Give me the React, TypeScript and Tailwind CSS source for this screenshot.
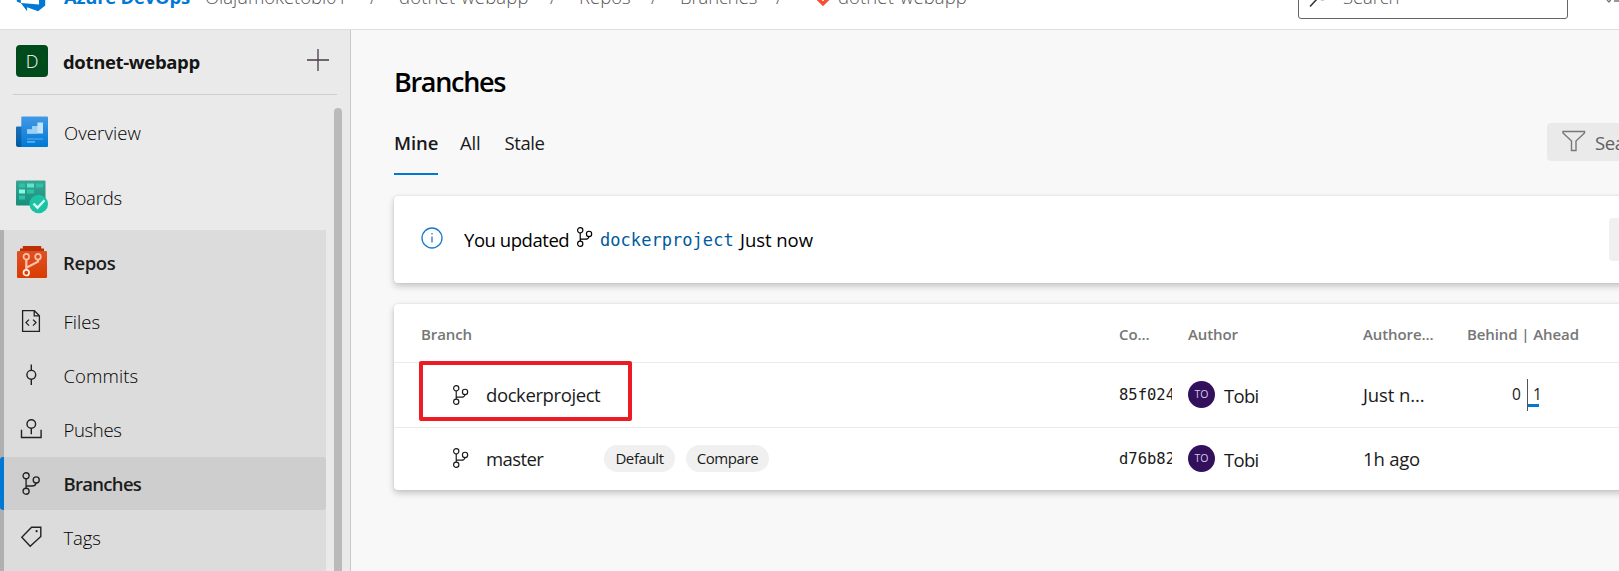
import React from "react";

function BranchIcon({ className }: { className: string }) {
  return (
    <svg viewBox="0 0 18 22" className={`shrink-0 ${className}`} fill="none" stroke="currentColor" strokeWidth="1.3">
      <circle cx="4.3" cy="3.6" r="2.9" />
      <circle cx="4.3" cy="18.4" r="2.9" />
      <circle cx="14" cy="7.6" r="2.9" />
      <path d="M4.3 6.5v9M14 10.5c-.5 1.9-1.8 2.9-3.8 2.9H4.3" />
    </svg>
  );
}

function FilesIcon() {
  return (
    <svg viewBox="0 0 22 24" className="h-6 w-[22px]" fill="none" stroke="currentColor" strokeWidth="1.3">
      <path d="M2.6 1.7h11.8l5 5v15.6H2.6zM14.2 1.7v5.2h5.2" />
      <path d="M9 10.6l-3 3 3 3M13 10.6l3 3-3 3" />
    </svg>
  );
}

function CommitIcon() {
  return (
    <svg viewBox="0 0 22 24" className="h-6 w-[22px]" fill="none" stroke="currentColor" strokeWidth="1.4">
      <circle cx="11.3" cy="11.8" r="4.4" />
      <path d="M11.3 1.6v5.8M11.3 16.2V22" />
    </svg>
  );
}

function PushIcon() {
  return (
    <svg viewBox="0 0 22 24" className="h-6 w-[22px]" fill="none" stroke="currentColor" strokeWidth="1.4">
      <circle cx="11.3" cy="7" r="4.3" />
      <path d="M11.3 11.3v6M1.5 12.8v7.7h19.6v-7.7" />
    </svg>
  );
}

function TagIcon() {
  return (
    <svg viewBox="0 0 22 24" className="h-6 w-[22px]" fill="none" stroke="currentColor" strokeWidth="1.4">
      <path d="M11.6 2.2h9.2v9.2L10.2 21.2l-8.4-9z" />
      <circle cx="16.6" cy="6.2" r="1.1" fill="currentColor" stroke="none" />
    </svg>
  );
}

function OverviewIcon() {
  return (
    <svg viewBox="0 0 32 32" className="size-8">
      <defs>
        <linearGradient id="ov" x1="0" y1="0" x2="0" y2="1">
          <stop offset="0" stopColor="#4299e6" />
          <stop offset="1" stopColor="#0078d4" />
        </linearGradient>
        <linearGradient id="ovb" x1="0" y1="0" x2="0" y2="1">
          <stop offset="0" stopColor="#1e70b8" />
          <stop offset="1" stopColor="#005ba1" />
        </linearGradient>
      </defs>
      <path d="M1 10.5h6V31H2a2 2 0 0 1-2-2V11.5a1 1 0 0 1 1-1z" fill="url(#ovb)" />
      <path d="M6 .5h25a1 1 0 0 1 1 1V30a1 1 0 0 1-1 1H4.5a1 1 0 0 0 .8-1V1.2A.7.7 0 0 1 6 .5z" fill="url(#ov)" />
      <path d="M11 13.5h5.2v-3.3h5.2V6.5H27v11H11z" fill="#c3e3fb" />
      <path d="M11 13.5h5.2v-3.3h5.2v7.3H11z" fill="#9bd0f8" />
      <path d="M11 22.4h16v1.2H11zM11 25h8v1.8h-8z" fill="#5cb0f0" />
    </svg>
  );
}

function BoardsIcon() {
  return (
    <svg viewBox="0 0 32 34" className="h-[34px] w-8">
      <defs>
        <linearGradient id="bd" x1="0" y1="0" x2="0" y2="1">
          <stop offset="0" stopColor="#3ba594" />
          <stop offset="1" stopColor="#16907b" />
        </linearGradient>
      </defs>
      <rect x="0" y=".5" width="29.5" height="25" rx="1" fill="url(#bd)" />
      <path d="M3 3.5h6v4H3zM20 3.5h7v4h-7zM11 9.5h7v4h-7zM3 15.5h6v4H3z" fill="#2bc4aa" />
      <path d="M11 3.5h7v4h-7z" fill="#5ee6cc" />
      <path d="M3 9.5h6v4H3z" fill="#86fbe6" />
      <circle cx="22.7" cy="24" r="9.3" fill="#1bc3a4" />
      <path d="M17.5 23.7l4 4 7-7.4" fill="none" stroke="#d5fff8" strokeWidth="2.4" />
    </svg>
  );
}

function ReposIcon() {
  return (
    <svg viewBox="0 0 32 32" className="-mt-0.5 size-8">
      <defs>
        <linearGradient id="rp" x1="0" y1="0" x2="0" y2="1">
          <stop offset="0" stopColor="#de5126" />
          <stop offset="1" stopColor="#da3b01" />
        </linearGradient>
      </defs>
      <path d="M6.8 0h18.4v2.6H28V6H4V2.6h2.8z" fill="#bb2f00" />
      <rect x="1" y="5" width="30" height="27" rx="1" fill="url(#rp)" />
      <g fill="none" stroke="#ffc3ab" strokeWidth="1.7">
        <circle cx="10.3" cy="10.7" r="2.8" />
        <circle cx="22" cy="10.7" r="2.8" />
        <path d="M10.3 13.5v10.2M22 13.500v2.200l-11.700 6" strokeWidth="2.2" />
        <circle cx="10.3" cy="26.7" r="2.8" stroke="#fff0e8" />
      </g>
    </svg>
  );
}

function Header() {
  return (
    <header className="h-[30px] shrink-0 overflow-hidden border-b border-[#dfdfdf] bg-white">
      <div className="-mt-[35px] flex h-[64px] items-center whitespace-nowrap text-[18.5px] font-light text-[#555] *:shrink-0">
        <svg viewBox="0 0 18 18" className="-mt-px ml-[15px] size-8">
          <path
            fill="#0078d4"
            d="M17 4v9.740l-4 3.280-6.200-2.260V17l-3.510-4.590 10.230.8V4.440zm-3.410.490L7.850 1v2.290L2.580 4.840 1 6.870v4.610l2.260 1V6.570z"
          />
        </svg>
        <div className="ml-[17px] w-[141px] font-bold tracking-[-0.25px] text-[#0078d4]">Azure DevOps</div>
        <div className="w-[165px] tracking-[-0.05px]">Olajumoketobi01</div>
        <div className="w-[29px]">/</div>
        <div className="w-[151px] tracking-[0.15px]">dotnet-webapp</div>
        <div className="w-[29px]">/</div>
        <div className="w-[72px]">Repos</div>
        <div className="w-[29px]">/</div>
        <div className="w-[96px] tracking-[-0.1px]">Branches</div>
        <div className="w-[37px]">/</div>
        <svg viewBox="0 0 20 20" className="-mt-px size-5">
          <path d="M10 .3l9.5 9.5-9.5 9.5L.5 9.800z" fill="#f65033" />
          <path d="M10 5v9M10 7l4 4" stroke="#fff" strokeWidth="1.6" />
        </svg>
        <div className="ml-[5px] w-[144px] tracking-[0.1px]">dotnet-webapp</div>
        <svg viewBox="0 0 12 8" className="h-2 w-3" fill="none" stroke="currentColor">
          <path d="M1 1l5 5 5-5" />
        </svg>
        <div className="ml-[304px] mt-[3px] flex h-10 w-[270px] items-center rounded-[3px] border border-[#666]">
          <svg viewBox="0 0 22 22" className="ml-2.5 size-[22px]" fill="none" stroke="#333" strokeWidth="1.5">
            <circle cx="13.5" cy="5" r="6.5" />
            <path d="M9 10l-8 8.500" />
          </svg>
          <span className="-mt-[3px] ml-[12px] tracking-[-0.1px]">Search</span>
        </div>
        <svg viewBox="0 0 22 22" className="-mt-px ml-[38px] size-[22px]" fill="none" stroke="#777" strokeWidth="1.4">
          <path d="M8 3h14M8 9h14M8 15h14M1 14l2 2 3-4" />
        </svg>
      </div>
    </header>
  );
}

const services = [
  { label: "Overview", icon: <OverviewIcon />, cls: "tracking-[0.1px]" },
  { label: "Boards", icon: <BoardsIcon />, cls: "tracking-[-0.2px]" },
];

const hubs = [
  { label: "Files", icon: <FilesIcon />, cls: "tracking-[0.05px]" },
  { label: "Commits", icon: <CommitIcon />, cls: "tracking-[0.1px]" },
  { label: "Pushes", icon: <PushIcon />, cls: "tracking-[-0.35px]" },
  { label: "Branches", icon: <BranchIcon className="-mr-px h-[23px] w-5" />, cls: "tracking-[-0.7px]", active: true },
  { label: "Tags", icon: <TagIcon />, cls: "tracking-[-0.1px]" },
];

function Sidebar() {
  return (
    <aside className="flex w-[351px] shrink-0 flex-col overflow-hidden border-r border-[#c8c8c8] bg-[#eaeaea]">
      <div className="mx-[13px] flex h-[65px] shrink-0 items-center border-b border-[#cdcdcd] pl-[3px]">
        <div className="-mt-0.5 flex size-8 items-center justify-center rounded-[4px] bg-[#004b1c] text-[18px] font-light text-white">D</div>
        <div className="ml-[15px] w-[243px] text-[18.5px] font-bold tracking-[-0.35px] text-[#151515]">dotnet-webapp</div>
        <svg viewBox="0 0 24 24" className="-mt-1 size-6 shrink-0" fill="none" stroke="#4a3a4a" strokeWidth="1.3">
          <path d="M12 1v22M1 12h22" />
        </svg>
      </div>
      <div className="flex min-h-0 flex-1">
        <nav className="w-[326px] shrink-0 pt-[5px]">
          {services.map((s) => (
            <div key={s.label} className="flex h-[65px] items-center pl-4 *:first:-mt-0.5">
              {s.icon}
              <span className={`ml-4 mt-px text-[18.5px] font-light text-black ${s.cls}`}>{s.label}</span>
            </div>
          ))}
          <div className="border-l-4 border-[#b0b0b0] bg-[#dcdcdc] pb-10">
            <div className="flex h-[65px] items-center pl-3">
              <ReposIcon />
              <span className="ml-[15px] mt-px text-[18.5px] font-semibold tracking-[-0.4px] text-[#1c1c1c]">Repos</span>
            </div>
            <div className="flex flex-col gap-px">
              {hubs.map((h) => (
                <div
                  key={h.label}
                  className={`flex h-[53px] shrink-0 items-center pl-[15px] ${
                    h.active ? "-ml-1 rounded-[3px] border-l-4 border-[#0078d4] bg-[#cecece] font-semibold text-[#1c1c1c]" : "font-light text-black"
                  }`}
                >
                  <span className="-mt-px flex w-[23px] justify-center text-[#222]">{h.icon}</span>
                  <span className={`ml-[21.5px] text-[18.5px] ${h.cls}`}>{h.label}</span>
                </div>
              ))}
            </div>
          </div>
        </nav>
        <div className="ml-2 mt-[13px] h-[600px] w-2 rounded-full bg-[#bababa]" />
      </div>
    </aside>
  );
}

const cols = "grid grid-cols-[698px_69px_175px_104px_160px] items-center pl-[27px]";

function Author() {
  return (
    <div className="-mt-px flex items-center">
      <span className="flex size-[27px] items-center justify-center rounded-full bg-[#32105c] text-[10.5px] text-[#d8c8e8]">TO</span>
      <span className="ml-[9px] mt-0.5 text-[18.5px] tracking-[-0.7px]">Tobi</span>
    </div>
  );
}

function Hash({ value }: { value: string }) {
  return (
    <div className="mt-0.5 w-[53px] overflow-hidden whitespace-nowrap font-['DejaVu_Sans_Mono',monospace] text-[15.5px]">{value}</div>
  );
}

function Pill({ children, className }: { children: string; className: string }) {
  return (
    <span className={`flex h-[27px] items-center justify-center rounded-full bg-[#f0f0f0] text-[15px] ${className}`}>{children}</span>
  );
}

const card = "w-[1260px] rounded-[4px] bg-white shadow-[0_3px_7px_rgba(0,0,0,0.22),0_0_2px_rgba(0,0,0,0.1)]";

function Main() {
  return (
    <main className="min-w-0 flex-1 overflow-hidden bg-[#f8f8f8] pl-[43px] text-[#1a1a1a]">
      <h1 className="mt-[33px] h-[39px] text-[27px] font-semibold leading-[38px] tracking-[-1.3px] text-black">Branches</h1>
      <div className="mt-[15px] flex h-[58px] w-[1400px] items-start">
        <div className="flex w-[1153px] text-[18.5px] leading-[52px]">
          <div className="h-[58px] w-11 border-b-2 border-[#0078d4] font-semibold tracking-[-0.1px]">Mine</div>
          <div className="ml-[22px] tracking-[-0.2px]">All</div>
          <div className="ml-6 tracking-[-0.4px]">Stale</div>
        </div>
        <div className="mt-1.5 flex h-[38px] flex-1 items-center rounded-[4px] bg-[#eaeaea] pl-[15px] text-[18.5px] tracking-[-0.4px] text-[#606060]">
          <svg viewBox="0 0 24 22" className="-mt-0.5 mr-[9px] h-[22px] w-6" fill="none" stroke="#777" strokeWidth="1.4">
            <path d="M1 1.5h21.5V3L14 11v9.5H9.500V11L1 3z" />
          </svg>
          <span className="mt-0.5">Search branch name</span>
        </div>
      </div>
      <section className={`${card} mt-[21px] flex h-[87px] items-center text-black`}>
        <svg viewBox="0 0 22 22" className="-mt-[3px] ml-[27px] size-[22px]" fill="none" stroke="#1a7ad4" strokeWidth="1.3">
          <circle cx="11" cy="11" r="10" />
          <path d="M11 9.5v6M11 6v1.5" />
        </svg>
        <span className="ml-[21px] w-[112px] text-[18.5px] tracking-[-0.45px]">You updated</span>
        <BranchIcon className="-mt-1.5 h-5 w-[17px]" />
        <span className="ml-[7px] mt-[3px] w-[140px] font-['DejaVu_Sans_Mono',monospace] text-[17px] tracking-[0.05px] text-[#005a9e]">dockerproject</span>
        <span className="text-[18.5px] tracking-[-0.05px]">Just now</span>
        <div className="ml-auto mr-2 h-[43px] w-[37px] rounded-[4px] bg-[#f0f0f0]" />
      </section>
      <section className={`${card} mt-[21px] h-[186px]`}>
        <div className={`${cols} h-[59px] border-b border-[#eaeaea] pt-[3px] text-[15px] font-semibold tracking-[-0.1px] text-[#767676]`}>
          <span>Branch</span>
          <span>Co...</span>
          <span>Author</span>
          <span>Authore...</span>
          <span>Behind | Ahead</span>
        </div>
        <div className={`${cols} h-[65px] border-b border-[#eaeaea]`}>
          <div className="relative flex items-center pl-[31px]">
            <BranchIcon className="-mt-px h-5 w-[17px]" />
            <span className="ml-[17px] text-[18.5px] tracking-[-0.4px]">dockerproject</span>
            <div className="absolute -left-0.5 -top-[20px] h-[60px] w-[213px] rounded-[2px] border-4 border-[#ed1c24]" />
          </div>
          <Hash value="85f02434" />
          <Author />
          <div className="text-[18.5px] tracking-[-0.1px]">Just n...</div>
          <div className="flex h-8 pl-[45px] text-[15.5px]">
            <span className="w-[15px] leading-[30px]">0</span>
            <div className="flex flex-col border-l border-[#555]">
              <span className="h-[25px] pl-[5px] leading-[30px]">1</span>
              <div className="h-[3px] w-[11px] bg-[#0078d4]" />
            </div>
          </div>
        </div>
        <div className={`${cols} h-[62px]`}>
          <div className="-mt-0.5 flex items-center pl-[31px]">
            <BranchIcon className="h-5 w-[17px]" />
            <span className="ml-[17px] mt-0.5 w-[118px] text-[18.5px] tracking-[-0.6px]">master</span>
            <Pill className="w-[71px] tracking-[-0.4px]">Default</Pill>
            <Pill className="ml-[11px] w-[83px] tracking-[-0.4px]">Compare</Pill>
          </div>
          <Hash value="d76b8277" />
          <Author />
          <div className="text-[18.5px] tracking-[-0.2px]">1h ago</div>
        </div>
      </section>
    </main>
  );
}

export default function App() {
  return (
    <div className="flex h-[571px] w-[1619px] flex-col overflow-hidden font-['Open_Sans','Noto_Sans',sans-serif]">
      <Header />
      <div className="flex min-h-0 flex-1">
        <Sidebar />
        <Main />
      </div>
    </div>
  );
}
